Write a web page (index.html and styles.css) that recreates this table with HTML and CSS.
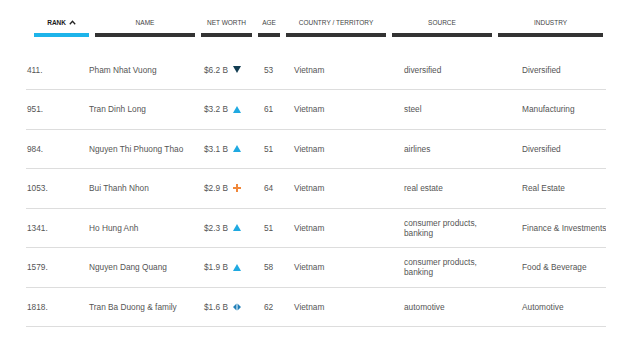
FILE: index.html
```html
<!DOCTYPE html>
<html>
<head>
<meta charset="utf-8">
<link rel="stylesheet" href="styles.css">
</head>
<body>
<div class="page">
  <div class="head">
    <div class="th th-rank active">RANK <svg class="caret" width="7" height="5" viewBox="0 0 7 5"><path d="M0.8 4.2 L3.5 1.3 L6.2 4.2" fill="none" stroke="#222" stroke-width="1.3"/></svg></div>
    <div class="th th-name">NAME</div>
    <div class="th th-worth">NET WORTH</div>
    <div class="th th-age">AGE</div>
    <div class="th th-country">COUNTRY / TERRITORY</div>
    <div class="th th-source">SOURCE</div>
    <div class="th th-industry">INDUSTRY</div>
  </div>
  <div class="body">
    <div class="row">
      <div class="td">411.</div>
      <div class="td">Pham Nhat Vuong</div>
      <div class="td worth">$6.2 B <svg class="ic" width="8" height="7" viewBox="0 0 8 7"><path d="M0 0 H8 L4 7 Z" fill="#123d52"/></svg></div>
      <div class="td">53</div>
      <div class="td">Vietnam</div>
      <div class="td src">diversified</div>
      <div class="td">Diversified</div>
    </div>
    <div class="row">
      <div class="td">951.</div>
      <div class="td">Tran Dinh Long</div>
      <div class="td worth">$3.2 B <svg class="ic" width="8" height="7" viewBox="0 0 8 7"><path d="M0 7 H8 L4 0 Z" fill="#1fa9e1"/></svg></div>
      <div class="td">61</div>
      <div class="td">Vietnam</div>
      <div class="td src">steel</div>
      <div class="td">Manufacturing</div>
    </div>
    <div class="row">
      <div class="td">984.</div>
      <div class="td">Nguyen Thi Phuong Thao</div>
      <div class="td worth">$3.1 B <svg class="ic" width="8" height="7" viewBox="0 0 8 7"><path d="M0 7 H8 L4 0 Z" fill="#1fa9e1"/></svg></div>
      <div class="td">51</div>
      <div class="td">Vietnam</div>
      <div class="td src">airlines</div>
      <div class="td">Diversified</div>
    </div>
    <div class="row">
      <div class="td">1053.</div>
      <div class="td">Bui Thanh Nhon</div>
      <div class="td worth">$2.9 B <svg class="ic" width="8" height="8" viewBox="0 0 8 8"><path d="M3 0 H5 V3 H8 V5 H5 V8 H3 V5 H0 V3 H3 Z" fill="#f0873a"/></svg></div>
      <div class="td">64</div>
      <div class="td">Vietnam</div>
      <div class="td src">real estate</div>
      <div class="td">Real Estate</div>
    </div>
    <div class="row">
      <div class="td">1341.</div>
      <div class="td">Ho Hung Anh</div>
      <div class="td worth">$2.3 B <svg class="ic" width="8" height="7" viewBox="0 0 8 7"><path d="M0 7 H8 L4 0 Z" fill="#1fa9e1"/></svg></div>
      <div class="td">51</div>
      <div class="td">Vietnam</div>
      <div class="td src">consumer products, banking</div>
      <div class="td">Finance &amp; Investments</div>
    </div>
    <div class="row">
      <div class="td">1579.</div>
      <div class="td">Nguyen Dang Quang</div>
      <div class="td worth">$1.9 B <svg class="ic" width="8" height="7" viewBox="0 0 8 7"><path d="M0 7 H8 L4 0 Z" fill="#1fa9e1"/></svg></div>
      <div class="td">58</div>
      <div class="td">Vietnam</div>
      <div class="td src">consumer products, banking</div>
      <div class="td">Food &amp; Beverage</div>
    </div>
    <div class="row">
      <div class="td">1818.</div>
      <div class="td">Tran Ba Duong &amp; family</div>
      <div class="td worth">$1.6 B <svg class="ic" width="8" height="8" viewBox="0 0 8 8"><path d="M3.5 0.5 L0 4 L3.5 7.5 Z M4.5 0.5 L8 4 L4.5 7.5 Z" fill="#2280b8"/></svg></div>
      <div class="td">62</div>
      <div class="td">Vietnam</div>
      <div class="td src">automotive</div>
      <div class="td">Automotive</div>
    </div>
  </div>
</div>
</body>
</html>
```

FILE: styles.css
```css
* { box-sizing: border-box; }
html, body {
  margin: 0;
  padding: 0;
  background: #fff;
}
body {
  font-family: "Liberation Sans", Arial, sans-serif;
  color: #555;
}
.page {
  width: 633px;
  height: 342px;
  overflow: hidden;
}
.head {
  display: flex;
  gap: 6px;
  padding: 17px 0 0 34px;
}
.th {
  font-size: 6.5px;
  line-height: 12px;
  color: #444;
  text-align: center;
  padding-bottom: 4px;
  border-bottom: 4px solid #333;
  white-space: nowrap;
}
.th.active {
  color: #1a1a1a;
  font-weight: bold;
  border-bottom-color: #1db4ea;
}
.caret {
  vertical-align: 0px;
  margin-left: 1px;
}
.th-rank { width: 55px; }
.th-name { width: 100px; }
.th-worth { width: 51px; }
.th-age { width: 22px; }
.th-country { width: 100px; }
.th-source { width: 100px; }
.th-industry { width: 105px; }

.body {
  margin: 13.5px 0 0 26px;
  width: 580px;
  overflow: hidden;
}
.row {
  display: grid;
  grid-template-columns: 62px 115px 60px 30px 110px 118px 85px;
  align-items: center;
  height: 39.5px;
  border-bottom: 1px solid #ddd;
  font-size: 8.3px;
  line-height: 10px;
}
.td {
  padding-left: 1px;
  white-space: nowrap;
}
.td.src {
  white-space: normal;
  padding-right: 22px;
}
.worth {
  display: flex;
  align-items: center;
}
.ic {
  margin-left: 5px;
  display: block;
}
```
